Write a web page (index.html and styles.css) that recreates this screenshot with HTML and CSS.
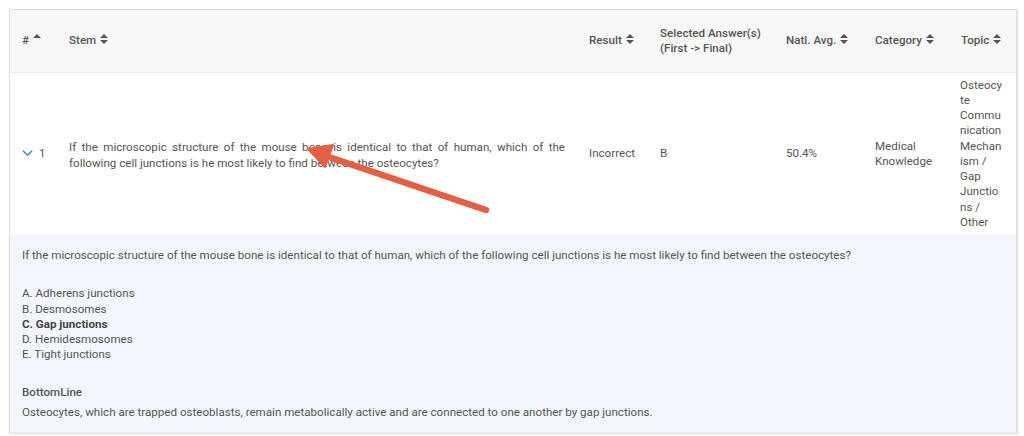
FILE: index.html
```html
<!DOCTYPE html>
<html>
<head>
<meta charset="utf-8">
<link rel="stylesheet" href="styles.css">
</head>
<body>
<div class="card">
  <table class="grid">
    <colgroup>
      <col class="c-num"><col class="c-stem"><col class="c-res"><col class="c-sel"><col class="c-avg"><col class="c-cat"><col class="c-top">
    </colgroup>
    <thead>
      <tr>
        <th><span class="hd"># <svg class="sort" viewBox="0 0 8 12" width="8" height="12"><path d="M0 5 L4 1 L8 5 Z"/></svg></span></th>
        <th><span class="hd">Stem <svg class="sort" viewBox="0 0 8 12" width="8" height="12"><path d="M0 5 L4 1 L8 5 Z M0 7 L8 7 L4 11 Z"/></svg></span></th>
        <th><span class="hd">Result <svg class="sort" viewBox="0 0 8 12" width="8" height="12"><path d="M0 5 L4 1 L8 5 Z M0 7 L8 7 L4 11 Z"/></svg></span></th>
        <th class="nowrap"><span class="hd">Selected Answer(s)<br>(First -&gt; Final)</span></th>
        <th><span class="hd">Natl. Avg. <svg class="sort" viewBox="0 0 8 12" width="8" height="12"><path d="M0 5 L4 1 L8 5 Z M0 7 L8 7 L4 11 Z"/></svg></span></th>
        <th><span class="hd">Category <svg class="sort" viewBox="0 0 8 12" width="8" height="12"><path d="M0 5 L4 1 L8 5 Z M0 7 L8 7 L4 11 Z"/></svg></span></th>
        <th><span class="hd">Topic <svg class="sort" viewBox="0 0 8 12" width="8" height="12"><path d="M0 5 L4 1 L8 5 Z M0 7 L8 7 L4 11 Z"/></svg></span></th>
      </tr>
    </thead>
    <tbody>
      <tr class="row">
        <td><span class="num"><svg class="chev" viewBox="0 0 12 8" width="11" height="8"><path d="M1 1.5 L6 6.5 L11 1.5" fill="none" stroke="currentColor" stroke-width="1.6"/></svg>1</span></td>
        <td class="stem">If the microscopic structure of the mouse bone is identical to that of human, which of the following cell junctions is he most likely to find between the osteocytes?</td>
        <td>Incorrect</td>
        <td>B</td>
        <td>50.4%</td>
        <td>Medical Knowledge</td>
        <td class="topic">Osteocyte Communication Mechanism / Gap Junctions / Other</td>
      </tr>
      <tr class="detail">
        <td colspan="7">
          <p class="q">If the microscopic structure of the mouse bone is identical to that of human, which of the following cell junctions is he most likely to find between the osteocytes?</p>
          <ul class="opts">
            <li>A. Adherens junctions</li>
            <li>B. Desmosomes</li>
            <li class="correct">C. Gap junctions</li>
            <li>D. Hemidesmosomes</li>
            <li>E. Tight junctions</li>
          </ul>
          <h4 class="bl">BottomLine</h4>
          <p class="expl">Osteocytes, which are trapped osteoblasts, remain metabolically active and are connected to one another by gap junctions.</p>
        </td>
      </tr>
    </tbody>
  </table>
</div>
<svg class="arrow" width="1024" height="436" viewBox="0 0 1024 436">
  <line x1="486" y1="210" x2="326" y2="156" stroke="#e45f43" stroke-width="6.5" stroke-linecap="round"/>
  <polygon points="308,149 333,145 325,167" fill="#e45f43" stroke="#e45f43" stroke-width="2" stroke-linejoin="round"/>
</svg>
</body>
</html>
```
FILE: styles.css
```css
html, body { margin: 0; padding: 0; background: #fff; }
body {
  font-family: Roboto, "Liberation Sans", sans-serif;
  font-size: 11.6px;
  color: #555;
  position: relative;
  width: 1024px;
  height: 436px;
  overflow: hidden;
}
.card {
  margin: 9px 0 0 9px;
  width: 1006px;
  border: 1px solid #dcdcdc;
  border-bottom: none;
  box-shadow: 1px 1px 2px rgba(0,0,0,0.12);
}
.grid {
  width: 100%;
  border-collapse: collapse;
  table-layout: fixed;
}
.c-num { width: 47px; }
.c-stem { width: 520px; }
.c-res { width: 71px; }
.c-sel { width: 126px; }
.c-avg { width: 89px; }
.c-cat { width: 86px; }
.c-top { width: 67px; }
thead tr { background: #f8f8f8; height: 62px; border-bottom: 1px solid #ececec; }
th {
  text-align: left;
  font-weight: 500;
  color: #555;
  padding: 0 12px;
  line-height: 15px;
  vertical-align: middle;
}
th.nowrap { white-space: nowrap; padding-right: 0; }
.hd { display: inline-block; }
.sort { fill: #555; vertical-align: -1px; margin-left: 1px; }
.row td {
  padding: 5px 12px 5px;
  line-height: 15.25px;
  vertical-align: middle;
}
.row td.stem { padding-top: 7px; line-height: 16px; }
.row td.topic { padding-left: 11px; padding-right: 12px; overflow-wrap: anywhere; }
.stem { text-align: justify; }
.num { display: inline-flex; align-items: center; gap: 6px; }
.chev { color: #3b7ddd; }
.detail { background: #f3f6fd; border-bottom: 1px solid #e6e8ec; }
.detail td { padding: 13px 12px 12px; line-height: 15.25px; }
.q { margin: 0 0 23px; }
.opts { list-style: none; margin: 0 0 22px; padding: 0; }
.correct { font-weight: 700; color: #444; }
.bl { margin: 0 0 5px; font-size: 11.6px; font-weight: 500; color: #555; }
.expl { margin: 0; }
.arrow { position: absolute; left: 0; top: 0; pointer-events: none; }
```
